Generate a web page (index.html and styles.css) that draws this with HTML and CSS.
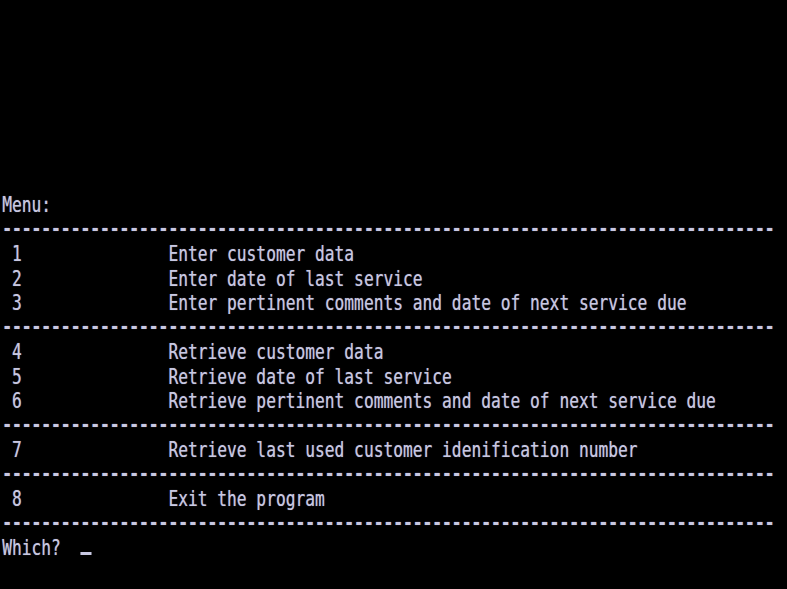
FILE: index.html
```html
<!DOCTYPE html>
<html lang="en">
<head>
<meta charset="utf-8">
<title>Menu</title>
<link rel="stylesheet" href="styles.css">
</head>
<body>
<main class="screen">
  <div class="text">
    <div class="row">Menu:</div>
    <div class="row rule">-------------------------------------------------------------------------------</div>
    <div class="row"> 1               Enter customer data</div>
    <div class="row"> 2               Enter date of last service</div>
    <div class="row"> 3               Enter pertinent comments and date of next service due</div>
    <div class="row rule">-------------------------------------------------------------------------------</div>
    <div class="row"> 4               Retrieve customer data</div>
    <div class="row"> 5               Retrieve date of last service</div>
    <div class="row"> 6               Retrieve pertinent comments and date of next service due</div>
    <div class="row rule">-------------------------------------------------------------------------------</div>
    <div class="row"> 7               Retrieve last used customer idenification number</div>
    <div class="row rule">-------------------------------------------------------------------------------</div>
    <div class="row"> 8               Exit the program</div>
    <div class="row rule">-------------------------------------------------------------------------------</div>
    <div class="row">Which?  <span class="cursor"></span></div>
  </div>
</main>
</body>
</html>
```

FILE: styles.css
```css
html, body {
  margin: 0;
  padding: 0;
  background: #000;
  overflow: hidden;
}

.screen {
  width: 787px;
  height: 589px;
  background: #000;
  overflow: hidden;
}

.text {
  display: flex;
  flex-direction: column;
  padding-top: 193px;
  padding-left: 3px;
  transform: scaleX(0.738);
  transform-origin: 0 0;
  font-family: "DejaVu Sans Mono", monospace;
  font-size: 22px;
  line-height: 24.54px;
  color: #c8c8e2;
  text-shadow: 0 0 1px rgba(200, 200, 226, 0.6);
}

.row {
  height: 24.54px;
  white-space: pre;
}

.rule {
  font-weight: bold;
  position: relative;
  top: -1px;
}

.cursor {
  display: inline-block;
  width: 1.1ch;
  height: 3px;
  background: #c8c8e2;
  vertical-align: 0;
}
```
